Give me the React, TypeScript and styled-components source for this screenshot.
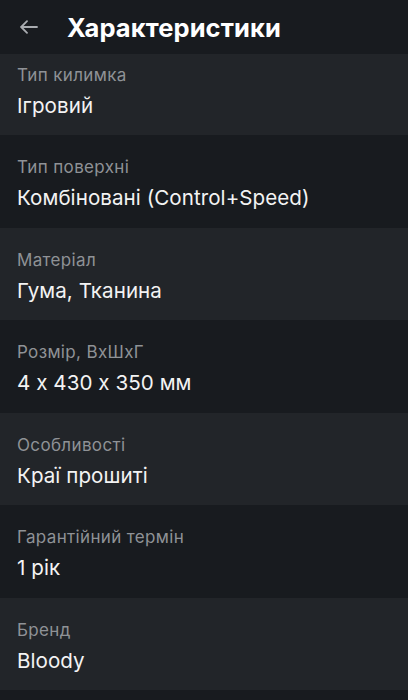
import React from "react";
import styled, { createGlobalStyle } from "styled-components";

const Global = createGlobalStyle`
  html, body { margin: 0; padding: 0; background: #181b1f; }
  body {
    font-family: Inter, "Noto Sans", "DejaVu Sans", sans-serif;
    font-feature-settings: "calt" 0;
    -webkit-font-smoothing: antialiased;
  }
  * { box-sizing: border-box; }
`;

const Screen = styled.div`
  width: 408px;
  height: 700px;
  display: flex;
  flex-direction: column;
  background: #181b1f;
  overflow: hidden;
`;

const Header = styled.header`
  height: 54px;
  flex: none;
  display: flex;
  align-items: center;
  padding-left: 19px;
  gap: 28px;
  background: #181b1f;
  position: relative;
  z-index: 1;
`;

const BackButton = styled.button`
  width: 20px;
  height: 20px;
  padding: 0;
  border: 0;
  background: none;
  display: flex;
  align-items: center;
  justify-content: center;
  color: #a9acb0;
`;

const Title = styled.h1`
  margin: 0;
  font-size: 25.5px;
  font-weight: 700;
  color: #ffffff;
  letter-spacing: 0.1px;
`;

const Viewport = styled.div`
  flex: 1;
  overflow: hidden;
`;

const List = styled.div`
  display: flex;
  flex-direction: column;
  margin-top: -11.5px;
`;

const Row = styled.div<{ $alt: boolean }>`
  padding: 22px 17px 16.5px;
  background: ${(p) => (p.$alt ? "#222529" : "#181b1f")};
  display: flex;
  flex-direction: column;
  gap: 8px;
`;

const Label = styled.div`
  font-size: 17px;
  line-height: 20px;
  letter-spacing: 0.35px;
  color: #8f9296;
`;

const Value = styled.div`
  font-size: 20.6px;
  line-height: 26px;
  letter-spacing: 0.05px;
  color: #f3f3f3;
`;

const specs = [
  ["Тип килимка", "Ігровий"],
  ["Тип поверхні", "Комбіновані (Control+Speed)"],
  ["Матеріал", "Гума, Тканина"],
  ["Розмір, ВхШхГ", "4 x 430 x 350 мм"],
  ["Особливості", "Краї прошиті"],
  ["Гарантійний термін", "1 рік"],
  ["Бренд", "Bloody"],
];

export default function App() {
  return (
    <Screen>
      <Global />
      <Header>
        <BackButton aria-label="Назад">
          <svg width="18" height="14" viewBox="0 0 18 14" fill="none" stroke="currentColor" strokeWidth="1.8" strokeLinecap="round" strokeLinejoin="round">
            <path d="M17 7H1.5" />
            <path d="M7 1.2L1.2 7L7 12.8" />
          </svg>
        </BackButton>
        <Title>Характеристики</Title>
      </Header>
      <Viewport>
        <List>
          {specs.map(([l, v], i) => (
            <Row key={l} $alt={i % 2 === 0}>
              <Label>{l}</Label>
              <Value>{v}</Value>
            </Row>
          ))}
        </List>
      </Viewport>
    </Screen>
  );
}
